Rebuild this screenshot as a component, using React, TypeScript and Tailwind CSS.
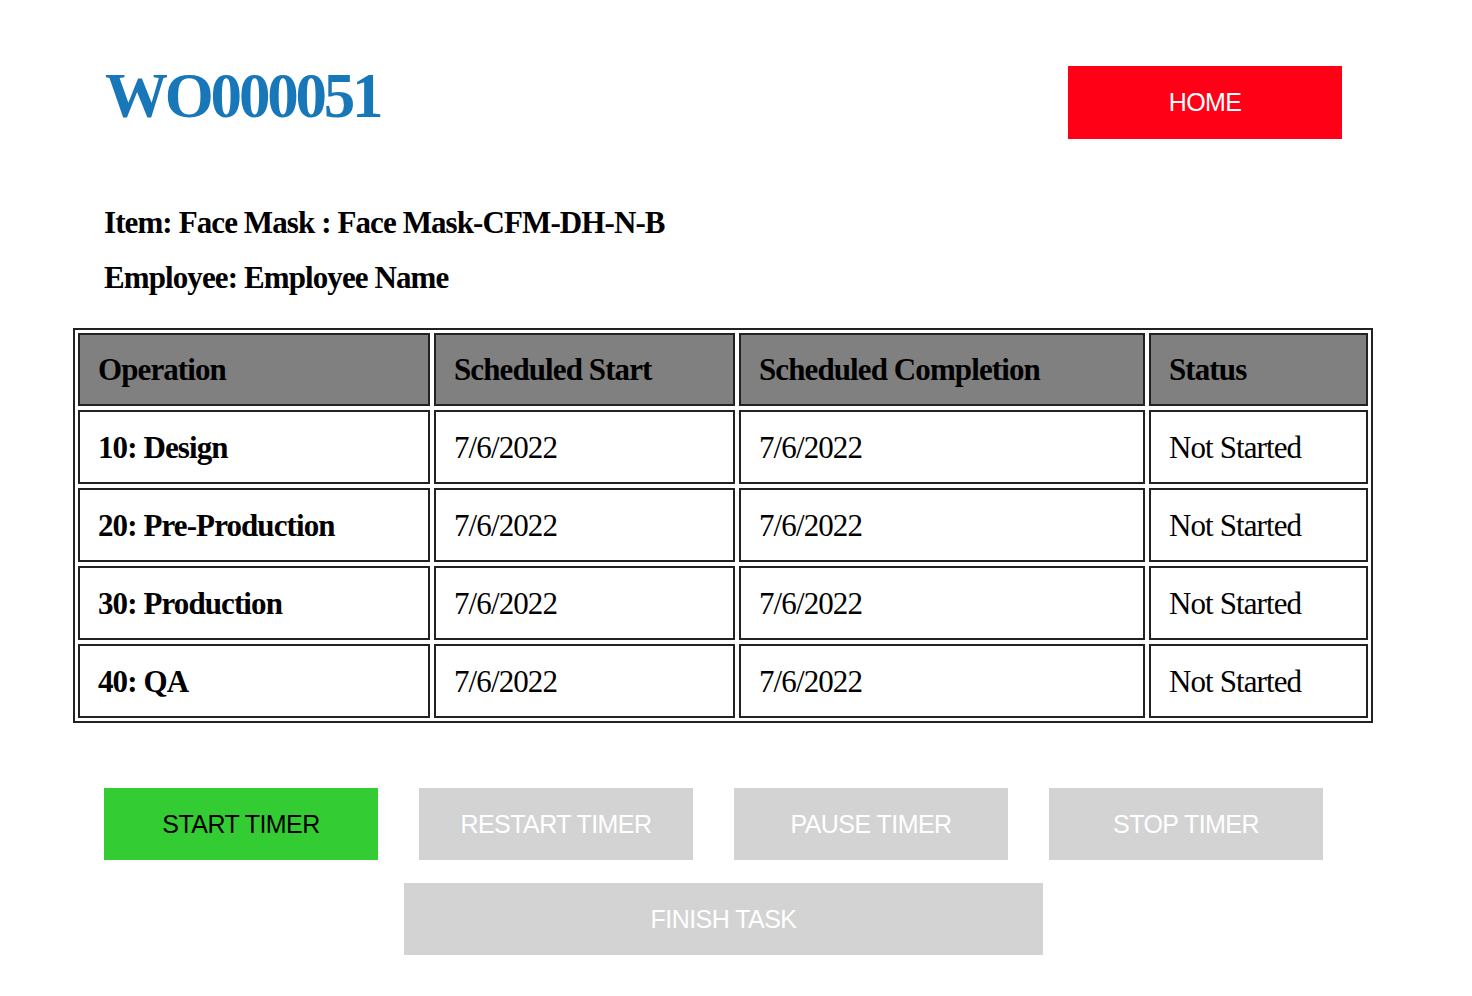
import React from "react";

const rows = [
  ["10: Design", "7/6/2022", "7/6/2022", "Not Started"],
  ["20: Pre-Production", "7/6/2022", "7/6/2022", "Not Started"],
  ["30: Production", "7/6/2022", "7/6/2022", "Not Started"],
  ["40: QA", "7/6/2022", "7/6/2022", "Not Started"],
];

function Cell({ children, head, bold }: { children: React.ReactNode; head?: boolean; bold?: boolean }) {
  return (
    <div
      className={
        "flex items-center border-2 border-[#222] pl-[18px] font-['Liberation_Serif','Times_New_Roman',serif] text-[31px] leading-none tracking-[-0.9px] text-black " +
        (head ? "h-[73px] bg-[#808080] font-bold" : "h-[74px] bg-white") +
        (bold ? " font-bold" : "")
      }
    >
      {children}
    </div>
  );
}

function Btn({ children, active }: { children: React.ReactNode; active?: boolean }) {
  return (
    <div
      className={
        "flex h-[72px] w-[274px] items-center justify-center font-['Liberation_Sans',Arial,sans-serif] text-[25px] leading-none tracking-[-0.55px] " +
        (active ? "bg-[#33cc33] text-black" : "bg-[#d3d3d3] text-white")
      }
    >
      {children}
    </div>
  );
}

export default function App() {
  return (
    <div className="min-h-[996px] w-full bg-white pl-[73px]">
      <div className="flex items-start pt-[65px]">
        <h1 className="ml-[32px] font-['Liberation_Serif','Times_New_Roman',serif] text-[63px] font-bold leading-none tracking-[-3.2px] text-[#1877b8]">
          WO000051
        </h1>
        <div className="ml-auto mr-[130px] mt-[1px] flex h-[73px] w-[274px] items-center justify-center bg-[#ff0016] font-['Liberation_Sans',Arial,sans-serif] text-[25px] leading-none tracking-[-0.6px] text-white">
          HOME
        </div>
      </div>

      <div className="ml-[31px] mt-[68px] flex flex-col gap-[24px] font-['Liberation_Serif','Times_New_Roman',serif] text-[31px] font-bold leading-none tracking-[-0.9px] text-black">
        <div>Item: Face Mask : Face Mask-CFM-DH-N-B</div>
        <div>Employee: Employee Name</div>
      </div>

      <div className="mt-[35px] grid w-[1300px] grid-cols-[352px_301px_406px_219px] gap-[4px] border-2 border-[#222] p-[3px]">
        <Cell head>Operation</Cell>
        <Cell head>Scheduled Start</Cell>
        <Cell head>Scheduled Completion</Cell>
        <Cell head>Status</Cell>
        {rows.map((r) => (
          <React.Fragment key={r[0]}>
            <Cell bold>{r[0]}</Cell>
            <Cell>{r[1]}</Cell>
            <Cell>{r[2]}</Cell>
            <Cell>{r[3]}</Cell>
          </React.Fragment>
        ))}
      </div>

      <div className="ml-[31px] mt-[65px] flex gap-[41px]">
        <Btn active>START TIMER</Btn>
        <Btn>RESTART TIMER</Btn>
        <Btn>PAUSE TIMER</Btn>
        <Btn>STOP TIMER</Btn>
      </div>
      <div className="ml-[331px] mt-[23px] flex h-[72px] w-[639px] items-center justify-center bg-[#d3d3d3] font-['Liberation_Sans',Arial,sans-serif] text-[25px] leading-none tracking-[-0.55px] text-white">
        FINISH TASK
      </div>
    </div>
  );
}
